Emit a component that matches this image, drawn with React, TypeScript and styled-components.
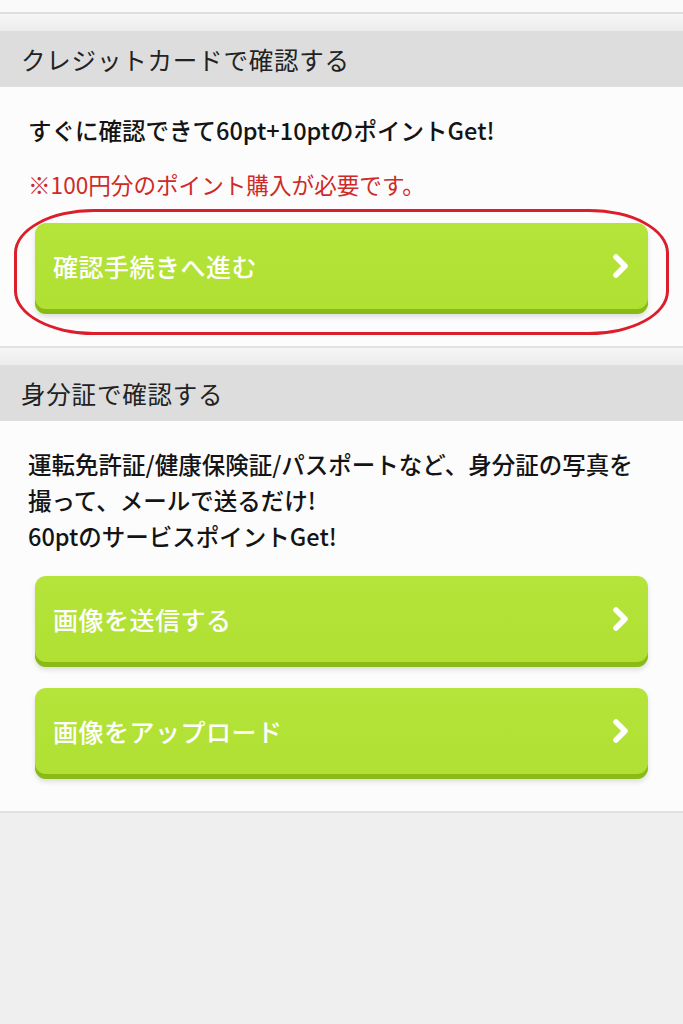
import React from 'react'
import styled, { createGlobalStyle } from 'styled-components'

const GlobalStyle = createGlobalStyle`
  html, body {
    margin: 0;
    padding: 0;
    background: #efefef;
  }
  body {
    font-family: 'Noto Sans CJK JP', 'Noto Sans', sans-serif;
    color: #1a1a1a;
  }
`

const Chevron = () => (
  <svg width="18" height="26" viewBox="0 0 18 26" aria-hidden="true">
    <path d="M4 4 L13 13 L4 22" fill="none" stroke="#fff" strokeWidth="5.5" strokeLinejoin="round" strokeLinecap="round" />
  </svg>
)

const GreenButton = ({ label }: { label: string }) => (
  <Button type="button">
    <ButtonLabel>{label}</ButtonLabel>
    <Chevron />
  </Button>
)

const App = () => {
  return (
    <Page>
      <GlobalStyle />
      <TopStrip />

      <Section>
        <SectionHeader>クレジットカードで確認する</SectionHeader>
        <SectionBody>
          <Lead>すぐに確認できて60pt+10ptのポイントGet!</Lead>
          <Note>※100円分のポイント購入が必要です。</Note>
          <Highlighted>
            <GreenButton label="確認手続きへ進む" />
            <Circle />
          </Highlighted>
        </SectionBody>
      </Section>

      <Section>
        <SectionHeader>身分証で確認する</SectionHeader>
        <SectionBody>
          <Lead>
            運転免許証/健康保険証/パスポートなど、身分証の写真を
            <br />
            撮って、メールで送るだけ!
            <br />
            60ptのサービスポイントGet!
          </Lead>
          <ButtonList>
            <GreenButton label="画像を送信する" />
            <GreenButton label="画像をアップロード" />
          </ButtonList>
        </SectionBody>
      </Section>
    </Page>
  )
}

export default App

const Page = styled.div`
  min-height: 1024px;
  background: #efefef;
`

const TopStrip = styled.div`
  height: 12px;
  background: #fafafa;
  border-bottom: 2px solid #dedede;
`

const Section = styled.section`
  padding-top: 17px;
  background: linear-gradient(#f6f6f6, #ececec 17px);
  border-bottom: 2px solid #e2e2e2;
`

const SectionHeader = styled.h2`
  margin: 0;
  height: 56px;
  display: flex;
  align-items: center;
  padding: 0 21px;
  background: #dddddd;
  font-size: 24.5px;
  font-weight: 400;
  color: #222;
  letter-spacing: 0.8px;
`

const SectionBody = styled.div`
  display: flex;
  flex-direction: column;
  padding: 25px 35px 32px;
  background: #fcfcfc;
`

const Lead = styled.p`
  margin: 0 0 0 -7px;
  font-size: 23.5px;
  line-height: 36px;
  font-weight: 500;
  color: #141414;
  white-space: nowrap;
`

const Note = styled.p`
  margin: 19px 0 20px -7px;
  font-size: 22.6px;
  line-height: 36px;
  font-weight: 400;
  color: #cf2a27;
`

const Highlighted = styled.div`
  position: relative;
`

const Circle = styled.div`
  position: absolute;
  left: -21px;
  right: -21px;
  top: -14px;
  bottom: -21px;
  border: 3px solid #dc1e2a;
  border-radius: 80px / 44px;
  pointer-events: none;
`

const ButtonList = styled.div`
  display: flex;
  flex-direction: column;
  gap: 21px;
  margin-top: 22px;
`

const Button = styled.button`
  display: flex;
  align-items: center;
  justify-content: space-between;
  width: 100%;
  height: 91px;
  padding: 0 18px 5px 18px;
  border: none;
  border-radius: 11px;
  background: linear-gradient(#b5e43a, #afe032);
  box-shadow: inset 0 -5px 0 #88bb18, 0 3px 5px rgba(0, 0, 0, 0.12);
  cursor: pointer;
  font-family: inherit;
`

const ButtonLabel = styled.span`
  font-size: 25px;
  font-weight: 500;
  color: #fff;
  letter-spacing: 0.5px;
`
